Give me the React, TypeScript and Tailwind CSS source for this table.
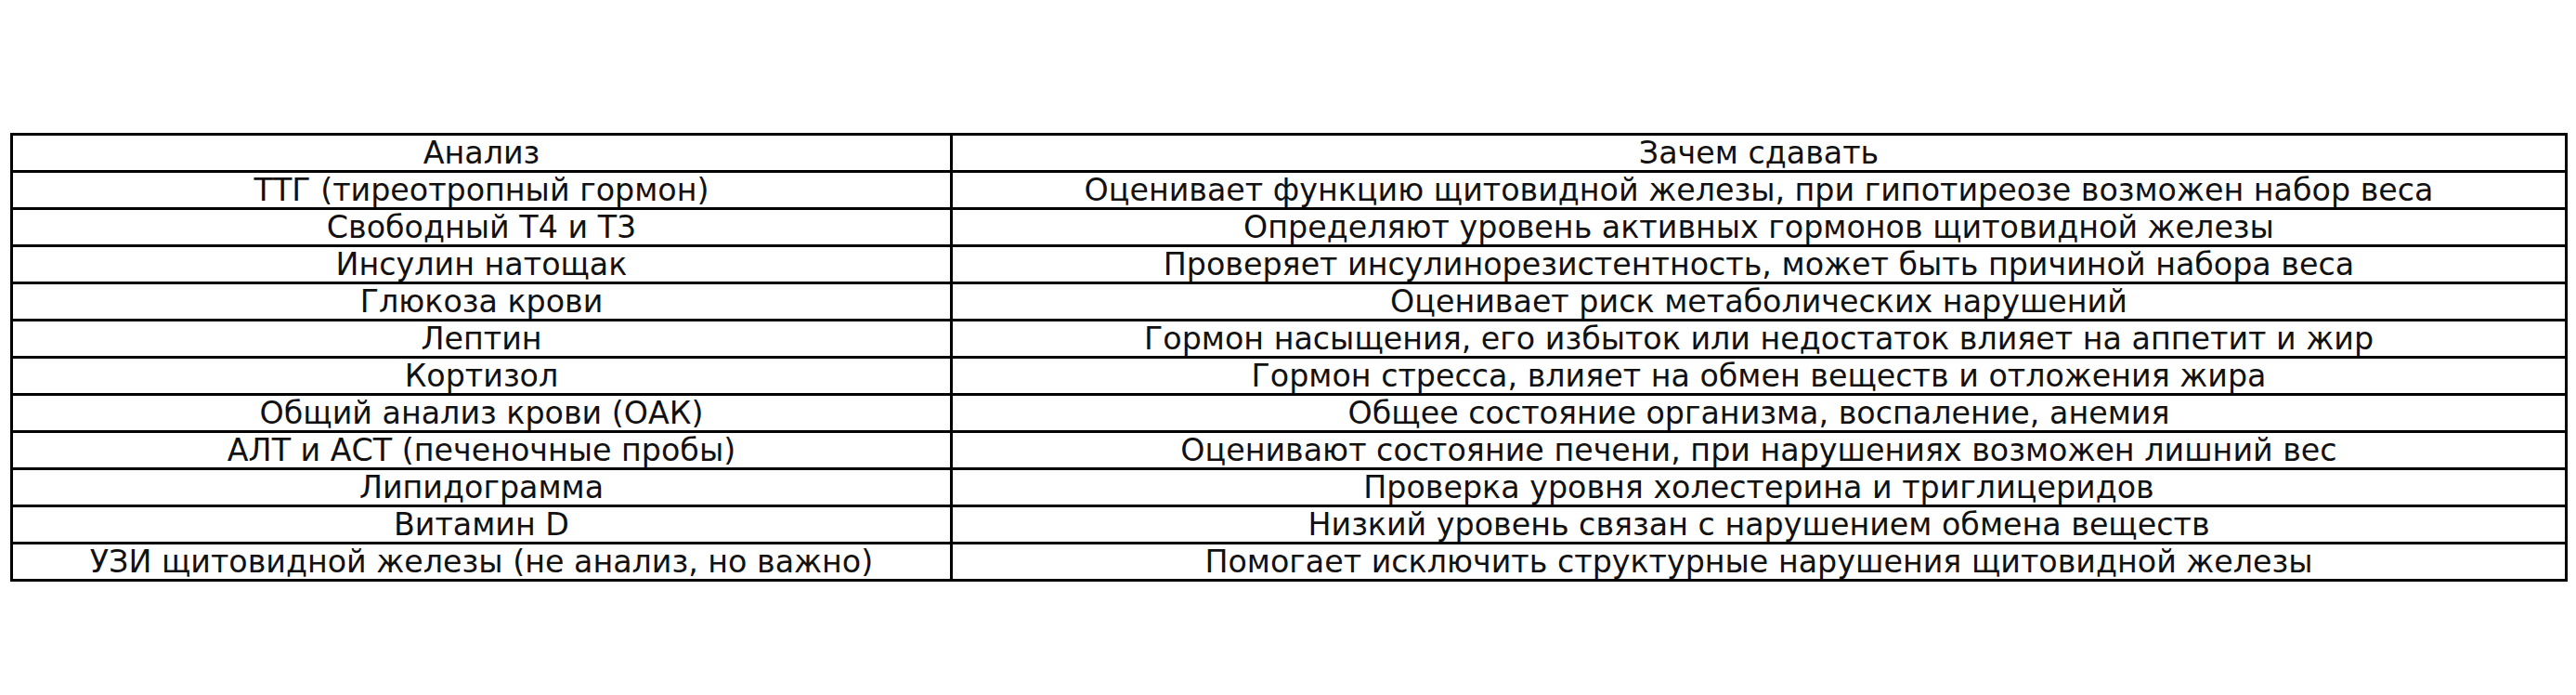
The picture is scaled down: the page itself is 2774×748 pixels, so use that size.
import React from 'react';

const rows: [string, string][] = [
  ['ТТГ (тиреотропный гормон)', 'Оценивает функцию щитовидной железы, при гипотиреозе возможен набор веса'],
  ['Свободный Т4 и Т3', 'Определяют уровень активных гормонов щитовидной железы'],
  ['Инсулин натощак', 'Проверяет инсулинорезистентность, может быть причиной набора веса'],
  ['Глюкоза крови', 'Оценивает риск метаболических нарушений'],
  ['Лептин', 'Гормон насыщения, его избыток или недостаток влияет на аппетит и жир'],
  ['Кортизол', 'Гормон стресса, влияет на обмен веществ и отложения жира'],
  ['Общий анализ крови (ОАК)', 'Общее состояние организма, воспаление, анемия'],
  ['АЛТ и АСТ (печеночные пробы)', 'Оценивают состояние печени, при нарушениях возможен лишний вес'],
  ['Липидограмма', 'Проверка уровня холестерина и триглицеридов'],
  ['Витамин D', 'Низкий уровень связан с нарушением обмена веществ'],
  ['УЗИ щитовидной железы (не анализ, но важно)', 'Помогает исключить структурные нарушения щитовидной железы'],
];

const App: React.FC = () => {
  return (
    <div className="w-[2774px] h-[748px] bg-white font-['DejaVu_Sans',sans-serif] text-[#111]">
      <div className="pt-[143px] pl-[11px]">
        <table className="table-fixed border-collapse w-[2754px] text-[33.3px] leading-none">
          <colgroup>
            <col className="w-[1012px]" />
            <col />
          </colgroup>
          <tbody>
            <tr>
              <td className="h-[40px] p-0 border-[3px] border-black text-center">Анализ</td>
              <td className="h-[40px] p-0 border-[3px] border-black text-center">Зачем сдавать</td>
            </tr>
            {rows.map(([a, b]) => (
              <tr key={a}>
                <td className="h-[40px] p-0 border-[3px] border-black text-center whitespace-nowrap">{a}</td>
                <td className="h-[40px] p-0 border-[3px] border-black text-center whitespace-nowrap">{b}</td>
              </tr>
            ))}
          </tbody>
        </table>
      </div>
    </div>
  );
};

export default App;
